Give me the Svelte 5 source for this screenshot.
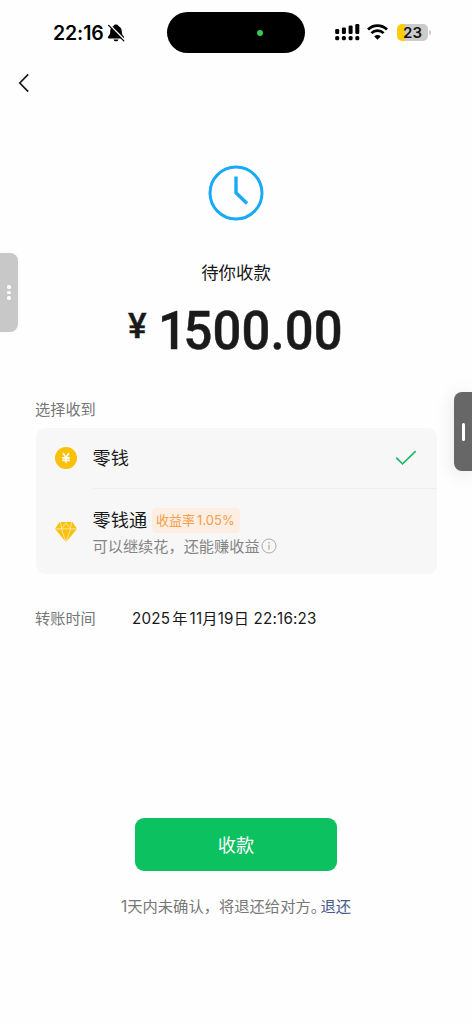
<script>
  const bars = [5, 6.5, 8.5, 10];
</script>

<div class="screen">
  <header class="status">
    <div class="time">22:16</div>
    <svg class="bell" width="18" height="20" viewBox="0 0 18 20">
      <path d="M9 1.500C7.500 1.500 6.800 2.200 6.600 3 4.200 3.900 3.200 6 3.200 8.400c0 2.900-.8 3.700-1.900 4.900-.8.900-.3 2.200.8 2.200h13.800c1.100 0 1.600-1.300.8-2.200-1.100-1.200-1.900-2-1.900-4.900 0-2.400-1-4.500-3.400-5.400C11.200 2.200 10.500 1.500 9 1.500zM6.600 16.400h4.800c-.2 1.200-1.200 1.900-2.400 1.900s-2.200-.7-2.400-1.900z" fill="#000" />
      <path d="M2.600 1.900L17.600 17" stroke="#fff" stroke-width="1.500" />
      <path d="M1.600 2.400L16.800 17.900" stroke="#000" stroke-width="1.300" stroke-linecap="round" />
    </svg>
    <div class="island"><i></i></div>
    <svg class="signal" width="25" height="18" viewBox="0 0 25 18">
      {#each bars as h, i}
        <rect x={0.2 + i * 6.700} y={11 - h} width="4" height={h} rx="1.200" />
        <rect x={0.2 + i * 6.700} y="13" width="4" height="4.200" rx="1.500" />
      {/each}
    </svg>
    <svg class="wifi" width="21" height="16" viewBox="0 0 21 16">
      <g fill="none" stroke="#000" stroke-width="2.700">
        <path d="M1 5.500a13.500 13.500 0 0 1 19 0" />
        <path d="M4.400 9.100a8.600 8.600 0 0 1 12.200 0" />
      </g>
      <path d="M10.500 15.800L7.200 12.400a4.700 4.700 0 0 1 6.600 0z" />
    </svg>
    <div class="battery"><span>23</span></div>
    <div class="cap"></div>
  </header>

  <nav>
    <svg width="12" height="20" viewBox="0 0 12 20">
      <path d="M10.200 1.300L1.800 10l8.400 8.700" fill="none" stroke="#191919" stroke-width="1.700" />
    </svg>
  </nav>

  <main>
    <svg class="clock" width="56" height="56" viewBox="0 0 56 56" fill="none" stroke="#18a9f8">
      <circle cx="28" cy="28" r="26" stroke-width="3" />
      <path d="M28 11.500v16.200L39 38.500" stroke-width="3.400" />
    </svg>
    <h1>待你收款</h1>
    <div class="amount"><span class="yen">¥</span><span class="value"><span class="lead">1</span>500.00</span></div>

    <section class="choose">
      <div class="label">选择收到</div>
      <div class="card">
        <div class="row first">
          <svg class="ico" width="22" height="22" viewBox="0 0 22 22">
            <circle cx="11" cy="11" r="11" fill="#fbc008" />
            <path d="M8 6.300L11 10.400l3-4.100M7.200 10.800h7.600M7.200 13.300h7.600M11 10.500v5.300" fill="none" stroke="#fff" stroke-width="1.700" />
          </svg>
          <div class="body">
            <span class="name">零钱</span>
            <svg class="check" width="22" height="16" viewBox="0 0 22 16">
              <path d="M1.200 7.600l6.300 6.300L20.700 1.200" fill="none" stroke="#1fb968" stroke-width="1.700" />
            </svg>
          </div>
        </div>
        <div class="row second">
          <svg class="ico" width="22" height="22" viewBox="0 0 22 22">
            <path d="M4.600 1h12.800L22 7.800 11 21.300 0 7.800z" fill="#fbc008" />
            <path d="M0 7.900h22M6.300 7.900L11 21l4.700-13.100M5.400 1l1.300 6.900L11 2l4.300 5.900L16.600 1" fill="none" stroke="#f7f7f7" stroke-width=".65" />
          </svg>
          <div class="body">
            <div class="title"><span class="name">零钱通</span><span class="tag">收益率<b>1.05%</b></span></div>
            <div class="desc">可以继续花，还能赚收益
              <svg width="16" height="16" viewBox="0 0 16 16" fill="none" stroke="#aaa">
                <circle cx="8" cy="8" r="7" />
                <path d="M8 6.800v5M8 4v1.400" stroke-width="1.200" />
              </svg>
            </div>
          </div>
        </div>
      </div>
    </section>

    <div class="detail"><span class="key">转账时间</span><span class="date">2025<em>年</em>11月19日 22:16:23</span></div>
    <button>收款</button>
    <p class="note"><span>1天内未确认，将退还给对方</span><span class="stop">。</span><a href="#refund">退还</a></p>
  </main>

  <div class="side left"><i></i><i></i><i></i></div>
  <div class="side right"><i></i></div>
</div>

<style>
  :global(body) { margin: 0; background: #fff; }
  .screen {
    position: relative;
    width: 472px;
    height: 1024px;
    overflow: hidden;
    background: #fefefe;
    color: #191919;
    font-family: Inter, "Noto Sans CJK SC", sans-serif;
  }
  svg { display: block; flex: none; }
  .status { display: flex; align-items: center; height: 65px; padding-left: 53px; box-sizing: border-box; }
  .time { width: 54px; font-size: 19.500px; font-weight: 600; line-height: 24px; color: #000; letter-spacing: -.1px; white-space: nowrap; }
  .bell { margin-right: 42px; }
  .island { display: flex; align-items: center; width: 138px; height: 41px; border-radius: 21px; background: #000; }
  .island i { width: 6px; height: 6px; margin-left: 90px; border-radius: 50%; background: #37c858; }
  .signal { margin: -2px 0 0 30px; }
  .wifi { margin: -2px 0 0 7px; }
  .battery {
    width: 31px; height: 17px; margin: -1px 0 0 9px; border-radius: 5px;
    background: linear-gradient(90deg, #ffcb0a 0 7.500px, #cbcbcb 7.500px);
    text-align: center; font-size: 15px; line-height: 17px; font-weight: 600; color: #111;
  }
  .cap { width: 2px; height: 5px; margin-left: 1px; border-radius: 0 2px 2px 0; background: #ccc; }
  nav { height: 36px; padding: 8px 18px 0; box-sizing: border-box; }
  main { display: flex; flex-direction: column; align-items: center; padding-top: 64px; }
  h1 { margin: 39px 0 0; font-size: 17.400px; line-height: 26px; font-weight: 400; }
  .amount { display: flex; align-items: flex-start; width: 216px; height: 58px; margin-top: 16px; font-family: Roboto, sans-serif; font-weight: 500; line-height: 58px; color: #1a1a1a; white-space: nowrap; }
  .yen { flex: none; width: 30px; font-size: 35px; line-height: 50px; -webkit-text-stroke: .4px #1a1a1a; }
  .value { flex: none; font-size: 54px; letter-spacing: .2px; transform: scaleX(.94); transform-origin: left center; -webkit-text-stroke: .5px #1a1a1a; }
  .lead { letter-spacing: -3.700px; }
  .choose { width: 401px; margin-top: 38px; }
  .label { font-size: 15.200px; line-height: 24px; color: #777; margin-left: -.5px; }
  .card { height: 146px; margin-top: 6px; border-radius: 9px; background: #f7f7f7; overflow: hidden; }
  .row { display: flex; padding-left: 19px; }
  .row .body { flex: 1; margin-left: 16px; }
  .first { height: 61px; }
  .first .ico { margin-top: 19px; }
  .first .body { display: flex; align-items: center; justify-content: space-between; border-bottom: 1px solid #eeeeee; padding-right: 20px; }
  .name { font-size: 18.200px; line-height: 26px; }
  .second .ico { margin-top: 32px; }
  .second .body { padding-top: 17px; }
  .title { display: flex; align-items: center; height: 28px; }
  .tag { height: 25px; margin-left: 5px; padding: 0 5px 0 4px; border-radius: 4px; background: #fdeee3; color: #f5a04a; font-size: 13px; line-height: 25px; white-space: nowrap; }
  .tag b { margin-left: 2px; font-weight: 400; }
  .desc { display: flex; align-items: center; height: 24px; margin-top: -1px; font-size: 15.200px; color: #858585; white-space: nowrap; }
  .desc svg { margin: 1px 0 0 1px; }
  .detail { display: flex; width: 402px; margin-top: 33px; font-size: 15.200px; line-height: 24px; white-space: nowrap; }
  .key { width: 97px; color: #777; }
  .date { letter-spacing: .2px; }
  .date em { margin: 0 2px; font-style: normal; }
  button { width: 202px; height: 53px; margin-top: 187px; padding: 0; border: 0; border-radius: 9px; background: #0bc160; color: #fff; font: 400 18.200px/53px "Noto Sans CJK SC", sans-serif; }
  .note { display: flex; align-items: baseline; margin: 21px 0 0; font-size: 15.300px; line-height: 26px; color: #777; white-space: nowrap; }
  .stop { margin-right: 2px; font-family: "Noto Sans CJK SC", sans-serif; font-feature-settings: "halt" 1; }
  .note a { color: #45598b; text-decoration: none; }
  .side { position: absolute; display: flex; align-items: center; justify-content: center; width: 18px; height: 79px; box-sizing: border-box; }
  .left { left: 0; top: 253px; flex-direction: column; gap: 2px; border-radius: 0 8px 8px 0; background: #c8c8c8; box-shadow: 0 0 5px #0000000a; }
  .left i { width: 3.500px; height: 3.500px; border-radius: 50%; background: #fff; }
  .right { right: 0; top: 392px; border-radius: 8px 0 0 8px; background: #676767; box-shadow: 0 3px 20px #0000001c; }
  .right i { width: 3px; height: 18px; border-radius: 2px; background: #fff; }
</style>
